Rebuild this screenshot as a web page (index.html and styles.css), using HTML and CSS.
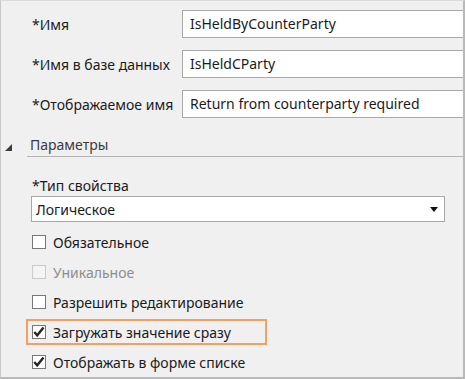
FILE: index.html
```
<!DOCTYPE html>
<html lang="ru">
<head>
    <meta charset="UTF-8">
    <meta name="viewport" content="width=device-width, initial-scale=1.0">
    <title>Свойство</title>
    <link rel="stylesheet" href="styles.css">
</head>
<body>
    <div class="panel">
        <div class="fields">
            <label class="field-label">*Имя</label>
            <div class="text-input">IsHeldByCounterParty</div>

            <label class="field-label">*Имя в базе данных</label>
            <div class="text-input">IsHeldCParty</div>

            <label class="field-label">*Отображаемое имя</label>
            <div class="text-input">Return from counterparty required</div>
        </div>

        <div class="section-head">
            <span class="toggle"></span>
            <span class="section-title">Параметры</span>
        </div>

        <div class="params">
            <div class="param-label">*Тип свойства</div>
            <div class="select">
                <span>Логическое</span>
                <span class="select-arrow"></span>
            </div>

            <div class="checks">
                <div class="check-row">
                    <label class="check"><span class="box"></span>Обязательное</label>
                </div>
                <div class="check-row">
                    <label class="check disabled"><span class="box"></span>Уникальное</label>
                </div>
                <div class="check-row">
                    <label class="check"><span class="box"></span>Разрешить редактирование</label>
                </div>
                <div class="check-row">
                    <label class="check highlight">
                        <span class="box">
                            <svg viewBox="0 0 14 14" width="14" height="14"><path d="M2.3 7 L5.2 10.3 L11.5 2.6" fill="none" stroke="#262626" stroke-width="2.4"/></svg>
                        </span>Загружать значение сразу
                    </label>
                </div>
                <div class="check-row">
                    <label class="check">
                        <span class="box">
                            <svg viewBox="0 0 14 14" width="14" height="14"><path d="M2.3 7 L5.2 10.3 L11.5 2.6" fill="none" stroke="#262626" stroke-width="2.4"/></svg>
                        </span>Отображать в форме списке
                    </label>
                </div>
            </div>
        </div>
    </div>
</body>
</html>
```

FILE: styles.css
```
* {
    box-sizing: border-box;
}

body {
    margin: 0;
    font-family: "Noto Sans", "Open Sans", sans-serif;
    font-size: 14px;
    color: #1b1b1b;
}

.panel {
    width: 465px;
    height: 379px;
    background: #f0f0f0;
    border-top: 1px solid #dcdcdc;
    border-left: 1px solid #c8c8c8;
    border-right: 2px solid #b9b9b9;
    border-bottom: 2px solid #b9b9b9;
    overflow: hidden;
}

.fields {
    display: grid;
    grid-template-columns: 150px 1fr;
    row-gap: 12px;
    align-items: center;
    padding: 9px 0 0 31px;
}

.field-label {
    white-space: nowrap;
}

.text-input {
    height: 28px;
    line-height: 26px;
    padding: 0 7px;
    background: #fff;
    border: 1px solid #a8a8a8;
    border-right: none;
    white-space: nowrap;
    overflow: hidden;
}

.section-head {
    display: flex;
    align-items: center;
    height: 23px;
    margin-top: 16px;
    padding-left: 4px;
}

.toggle {
    width: 0;
    height: 0;
    border-left: 7px solid transparent;
    border-bottom: 7px solid #3c3c3c;
    margin-top: 3px;
}

.section-title {
    flex: 1;
    height: 23px;
    line-height: 22px;
    margin-left: 15px;
    padding-left: 3px;
    color: #3a3a3a;
    border-bottom: 1px solid #b4b4b4;
}

.params {
    padding: 0 18px 0 30px;
}

.param-label {
    margin-top: 19px;
    height: 20px;
    line-height: 20px;
    padding-left: 1px;
}

.select {
    display: flex;
    align-items: center;
    justify-content: space-between;
    height: 26px;
    padding: 0 6px 0 4px;
    background: #fff;
    border: 1px solid #a8a8a8;
}

.select-arrow {
    width: 0;
    height: 0;
    border-left: 4.5px solid transparent;
    border-right: 4.5px solid transparent;
    border-top: 5px solid #111;
}

.checks {
    margin-top: 5px;
}

.check-row {
    height: 30px;
    display: flex;
    align-items: center;
}

.check {
    display: inline-flex;
    align-items: center;
    gap: 7px;
    padding-left: 1px;
    white-space: nowrap;
}

.box {
    width: 14px;
    height: 14px;
    background: #fff;
    border: 1px solid #777;
    display: flex;
    align-items: center;
    justify-content: center;
}

.box svg {
    display: block;
    flex: none;
}

.check.disabled {
    color: #8e8e8e;
}

.check.disabled .box {
    background: #f4f4f4;
    border-color: #cacaca;
}

.check.highlight {
    height: 26px;
    margin-left: -5px;
    padding: 0 34px 0 4px;
    border: 2px solid #eea364;
}
```
